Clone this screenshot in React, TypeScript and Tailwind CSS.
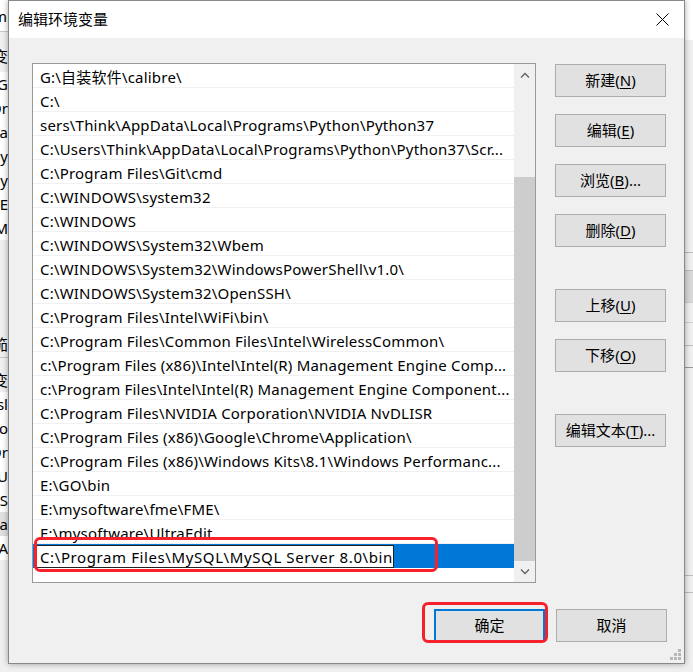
import React from "react";

const rows = [
  "G:\\自装软件\\calibre\\",
  "C:\\",
  "sers\\Think\\AppData\\Local\\Programs\\Python\\Python37",
  "C:\\Users\\Think\\AppData\\Local\\Programs\\Python\\Python37\\Scr...",
  "C:\\Program Files\\Git\\cmd",
  "C:\\WINDOWS\\system32",
  "C:\\WINDOWS",
  "C:\\WINDOWS\\System32\\Wbem",
  "C:\\WINDOWS\\System32\\WindowsPowerShell\\v1.0\\",
  "C:\\WINDOWS\\System32\\OpenSSH\\",
  "C:\\Program Files\\Intel\\WiFi\\bin\\",
  "C:\\Program Files\\Common Files\\Intel\\WirelessCommon\\",
  "c:\\Program Files (x86)\\Intel\\Intel(R) Management Engine Comp...",
  "c:\\Program Files\\Intel\\Intel(R) Management Engine Component...",
  "C:\\Program Files\\NVIDIA Corporation\\NVIDIA NvDLISR",
  "C:\\Program Files (x86)\\Google\\Chrome\\Application\\",
  "C:\\Program Files (x86)\\Windows Kits\\8.1\\Windows Performanc...",
  "E:\\GO\\bin",
  "E:\\mysoftware\\fme\\FME\\",
  "E:\\mysoftware\\UltraEdit",
];

// fragments of the window behind the dialog, left edge
const leftBits = ["G", "Or", "a", "y", "y", "E", "M"];
const leftBits2 = ["sl", "o", "Or", "IU", "OS"];

function Btn({
  label,
  mn,
  after = "",
  focus = false,
}: {
  label: string;
  mn?: string;
  after?: string;
  focus?: boolean;
}) {
  return (
    <div
      className={`w-[111px] h-[33px] bg-[#e1e1e1] flex items-center justify-center text-[15px] text-black ${
        focus ? "border-2 border-[#0078d7]" : "border border-[#adadad]"
      }`}
    >
      {label}
      {mn && (
        <>
          (<span className="underline underline-offset-2">{mn}</span>){after}
        </>
      )}
    </div>
  );
}

function Chevron({ up }: { up: boolean }) {
  return (
    <svg width="10" height="6" viewBox="0 0 10 6">
      <path
        d={up ? "M1 5.5 L5 1.5 L9 5.5" : "M1 0.5 L5 4.5 L9 0.5"}
        fill="none"
        stroke="#606060"
        strokeWidth="1.3"
      />
    </svg>
  );
}

export default function App() {
  return (
    <div
      className="relative w-[693px] h-[672px] overflow-hidden bg-[#f0f0f0] flex text-black"
      style={{ fontFamily: '"Noto Sans", "Noto Sans CJK SC", sans-serif' }}
    >
      {/* window behind, left edge */}
      <div className="w-[8px] shrink-0 flex flex-col text-[15px] leading-[24px]">
        <div className="h-[32px] bg-white border-b border-[#c8c8c8] flex justify-end items-center overflow-hidden">
          <span className="pr-[1px]">m</span>
        </div>
        <div className="h-[40px] pt-[12px] flex justify-end overflow-hidden">
          <span>变</span>
        </div>
        <div className="bg-white flex flex-col">
          {leftBits.map((b, i) => (
            <div key={i} className="h-[24px] flex justify-end overflow-hidden">
              <span>{b}</span>
            </div>
          ))}
        </div>
        <div className="h-[92px]" />
        <div className="h-[26px] border-b border-[#c8c8c8] flex justify-end overflow-hidden">
          <span>笳</span>
        </div>
        <div className="h-[24px] mt-[10px] flex justify-end overflow-hidden">
          <span>变</span>
        </div>
        <div className="bg-white flex flex-col">
          {leftBits2.map((b, i) => (
            <div key={i} className="h-[24px] flex justify-end overflow-hidden">
              <span>{b}</span>
            </div>
          ))}
        </div>
        <div className="h-[24px] bg-[#e0e0e0] flex justify-end overflow-hidden">
          <span>a</span>
        </div>
        <div className="h-[24px] bg-white flex justify-end overflow-hidden">
          <span>A</span>
        </div>
      </div>

      {/* dialog */}
      <div className="w-[677px] h-[664px] shrink-0 border border-[#888] bg-[#f0f0f0] flex flex-col shadow-[0_0_6px_rgba(0,0,0,0.35)] relative z-10">
        {/* title bar */}
        <div className="h-[37px] bg-white flex items-center justify-between">
          <span className="pl-[9px] text-[15px]">编辑环境变量</span>
          <div className="w-[44px] h-full flex items-center justify-center">
            <svg width="13" height="13" viewBox="0 0 13 13">
              <path d="M0.5 0.5 L12.5 12.5 M12.5 0.5 L0.5 12.5" stroke="#000" strokeWidth="1" />
            </svg>
          </div>
        </div>

        {/* body */}
        <div className="flex-1 flex flex-col pl-[23px] pt-[25px]">
          <div className="flex gap-[19px]">
            {/* list box */}
            <div className="w-[504px] h-[520px] border border-[#9a9a9a] bg-white flex">
              <div className="flex-1 flex flex-col">
                {rows.map((r, i) => (
                  <div
                    key={i}
                    className="h-[24px] border-b border-[#f0f0f0] pl-[7px] pt-[3px] flex items-center text-[15px] tracking-[0.2px] whitespace-nowrap overflow-hidden"
                  >
                    {r}
                  </div>
                ))}
                <div className="h-[24px] bg-[#0078d7] flex items-center">
                  <div className="ml-[3px] w-[358px] h-[23px] bg-white border border-[#222] flex items-center pl-[3px] pt-[2px] text-[15px] tracking-[0.6px] whitespace-nowrap">
                    C:\Program Files\MySQL\MySQL Server 8.0\bin
                    <span className="ml-[1px] w-[1px] h-[18px] bg-black" />
                  </div>
                </div>
              </div>
              {/* scrollbar */}
              <div className="w-[21px] bg-[#f0f0f0] flex flex-col">
                <div className="h-[21px] flex items-center justify-center">
                  <Chevron up />
                </div>
                <div className="h-[92px]" />
                <div className="flex-1 bg-[#cdcdcd]" />
                <div className="h-[21px] flex items-center justify-center">
                  <Chevron up={false} />
                </div>
              </div>
            </div>

            {/* side buttons */}
            <div className="flex flex-col pt-[1px]">
              <div className="flex flex-col gap-[17px]">
                <Btn label="新建" mn="N" />
                <Btn label="编辑" mn="E" />
                <Btn label="浏览" mn="B" after="..." />
                <Btn label="删除" mn="D" />
              </div>
              <div className="flex flex-col gap-[17px] mt-[42px]">
                <Btn label="上移" mn="U" />
                <Btn label="下移" mn="O" />
              </div>
              <div className="mt-[42px]">
                <Btn label="编辑文本" mn="T" after="..." />
              </div>
            </div>
          </div>

          {/* bottom buttons */}
          <div className="flex justify-end gap-[11px] pr-[17px] mt-[26px]">
            <Btn label="确定" focus />
            <Btn label="取消" />
          </div>
        </div>

        {/* resize grip */}
        <svg className="absolute right-[3px] bottom-[3px]" width="11" height="11" viewBox="0 0 11 11">
          <rect x="8" y="0" width="3" height="3" fill="#b8b8b8" />
          <rect x="4" y="4" width="3" height="3" fill="#b8b8b8" />
          <rect x="8" y="4" width="3" height="3" fill="#b8b8b8" />
          <rect x="0" y="8" width="3" height="3" fill="#b8b8b8" />
          <rect x="4" y="8" width="3" height="3" fill="#b8b8b8" />
          <rect x="8" y="8" width="3" height="3" fill="#b8b8b8" />
        </svg>
      </div>

      {/* window behind, right edge */}
      <div className="flex-1 flex flex-col">
        <div className="h-[40px] bg-white" />
        <div className="h-[212px]" />
        <div className="h-[18px] border-t border-[#bdbdbd]" />
        <div className="h-[32px] border-t border-[#bdbdbd] bg-[#d8d8d8]" />
        <div className="h-[20px] border-t border-[#d0d0d0]" />
        <div className="h-[23px] border-t border-[#d0d0d0]" />
        <div className="h-[22px] border-t border-[#bdbdbd]" />
        <div className="h-[208px] border-t border-[#9a9a9a]" />
        <div className="h-[17px] border-t border-[#bdbdbd]" />
        <div className="flex-1 border-t border-[#bdbdbd]" />
      </div>

      {/* red annotations */}
      <div className="absolute left-[34px] top-[537px] w-[404px] h-[35px] border-[3px] border-[#f5222d] rounded-[6px] z-20" />
      <div className="absolute left-[422px] top-[602px] w-[126px] h-[41px] border-[3px] border-[#f5222d] rounded-[6px] z-20" />
    </div>
  );
}
